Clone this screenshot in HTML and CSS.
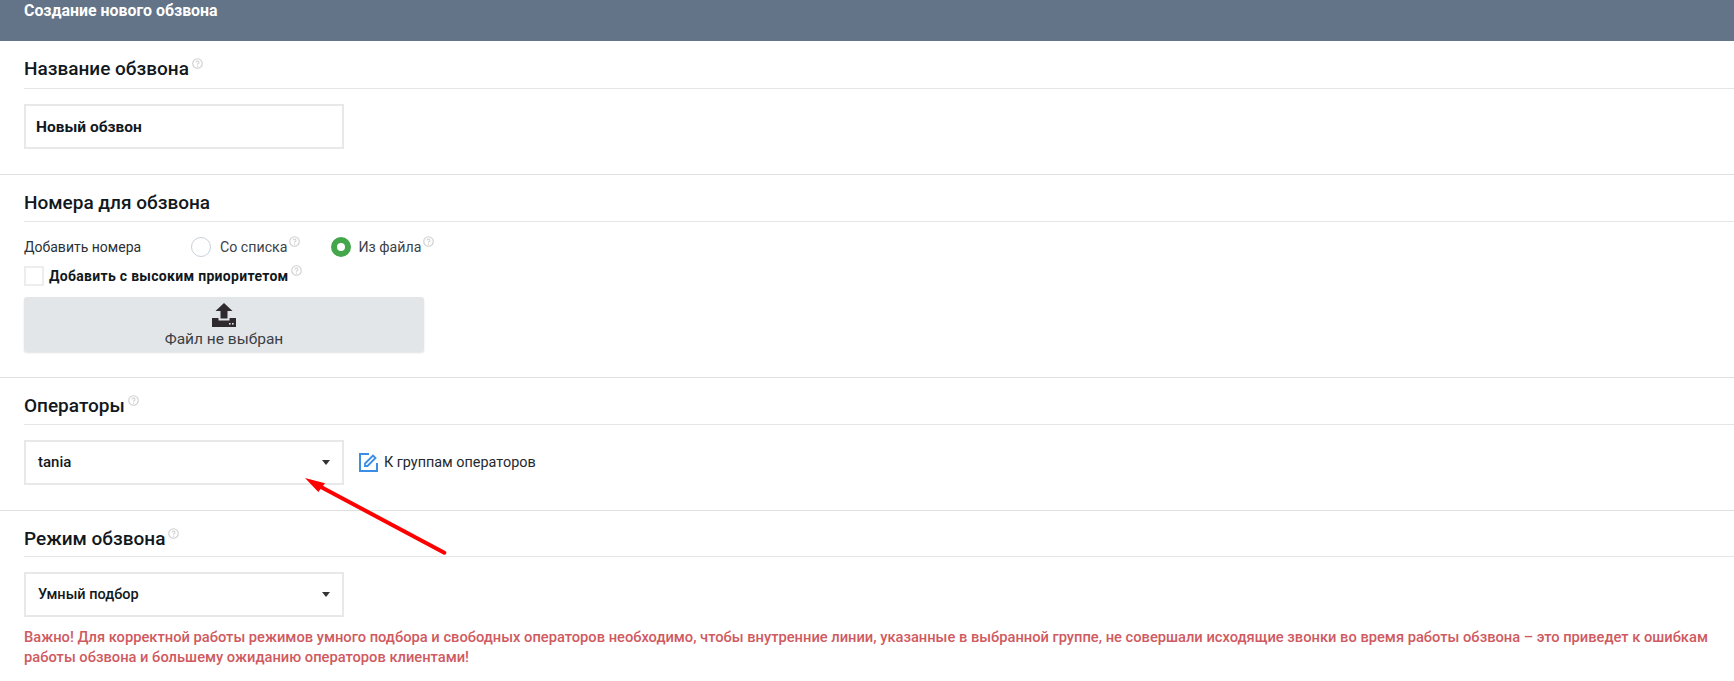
FILE: index.html
```html
<!DOCTYPE html>
<html lang="ru">
<head>
<meta charset="utf-8">
<title>Создание нового обзвона</title>
<link rel="stylesheet" href="styles.css">
</head>
<body>
<header class="topbar">Создание нового обзвона</header>
<section class="section s-name">
  <h2 class="title"><span>Название обзвона</span><svg class="help" viewBox="0 0 12 12"><use href="#q"/></svg></h2>
  <div class="field name-field">Новый обзвон</div>
</section>
<section class="section s-numbers">
  <h2 class="title"><span>Номера для обзвона</span></h2>
  <div class="radios">
    <span class="radio-label">Добавить номера</span>
    <span class="radio"></span><span class="opt">Со списка</span><svg class="help" viewBox="0 0 12 12"><use href="#q"/></svg>
    <span class="radio on"></span><span class="opt">Из файла</span><svg class="help" viewBox="0 0 12 12"><use href="#q"/></svg>
  </div>
  <div class="check-row">
    <span class="check"></span><b class="check-label">Добавить с высоким приоритетом</b><svg class="help" viewBox="0 0 12 12"><use href="#q"/></svg>
  </div>
  <div class="upload">
    <svg class="upload-icon" viewBox="0 0 24 24"><path d="M12 0 L20.5 8 H15.5 V15.5 H8.5 V8 H3.5 Z"/><path d="M0 15 H6.5 V17.5 H17.5 V15 H24 V24 H0 Z"/><rect x="17" y="20" width="1.6" height="1.6" fill="#e3e6e9"/><rect x="20" y="20" width="1.6" height="1.6" fill="#e3e6e9"/></svg>
    <span>Файл не выбран</span>
  </div>
</section>
<section class="section s-ops">
  <h2 class="title"><span>Операторы</span><svg class="help" viewBox="0 0 12 12"><use href="#q"/></svg></h2>
  <div class="select-row">
    <div class="field select"><span class="select-text">tania</span><i class="caret"></i></div>
    <a class="link"><svg class="edit" viewBox="0 0 19 19"><path d="M10 1 H1 V18 H18 V10" fill="none" stroke="#3a8ee6" stroke-width="2"/><path d="M6 10.5 L14 2.5 L16.5 5 L8.5 13 H6 Z" fill="none" stroke="#3a8ee6" stroke-width="1.8"/></svg>К группам операторов</a>
  </div>
</section>
<section class="section s-mode">
  <h2 class="title"><span>Режим обзвона</span><svg class="help" viewBox="0 0 12 12"><use href="#q"/></svg></h2>
  <div class="field select mode-select"><span>Умный подбор</span><i class="caret"></i></div>
  <p class="warn">Важно! Для корректной работы режимов умного подбора и свободных операторов необходимо, чтобы внутренние линии, указанные в выбранной группе, не совершали исходящие звонки во время работы обзвона – это приведет к ошибкам работы обзвона и большему ожиданию операторов клиентами!</p>
</section>
<svg class="arrow" viewBox="0 0 160 90"><path d="M144.3 77.7 L21 12" stroke="#ff0000" stroke-width="4" stroke-linecap="round"/><path d="M5 3 L25 8.3 L18.3 17 Z" fill="#ff0000"/></svg>
<svg class="defs" width="0" height="0"><symbol id="q" viewBox="0 0 12 12"><circle cx="6" cy="6" r="5.2" fill="none" stroke="#cfcfcf" stroke-width="1.2"/><path d="M4.4 4.8 A1.6 1.6 0 1 1 6.6 6.3 Q6 6.6 6 7.4" fill="none" stroke="#cfcfcf" stroke-width="1.1"/><circle cx="6" cy="9" r=".7" fill="#cfcfcf"/></symbol></svg>
</body>
</html>
```
FILE: styles.css
```css
* { box-sizing: border-box; }
html, body { margin: 0; height: 681px; overflow: hidden; }
body { position: relative; background: #fff; font-family: Roboto, "Liberation Sans", sans-serif; color: #111820; font-size: 14px; }
.topbar { height: 41px; background: #637488; color: #fff; font-weight: 700; font-size: 15.9px; line-height: 22px; padding-left: 24px; }
.section { border-bottom: 1px solid #dfdfdf; padding: 0 0 0 24px; }
.title { margin: 0; height: 47px; padding-top: 16px; border-bottom: 1px solid #e6e6e6; font-size: 19px; font-weight: 500; line-height: 24px; display: flex; align-items: flex-start; }
.title .help { margin: 1px 0 0 3px; }
.help { width: 11px; height: 11px; flex: none; }
.field { width: 320px; height: 45px; border: 2px solid #e8e8e8; padding-left: 10px; display: flex; align-items: center; font-weight: 500; font-size: 15px; }
.name-field { font-size: 15.5px; font-weight: 700; }
.s-name { height: 134px; }
.s-name .title { height: 48px; }
.s-name .field { margin-top: 15px; }
.s-numbers { height: 203px; }
.radios { display: flex; align-items: center; height: 20px; margin-top: 15px; color: #2a3138; }
.radio-label { width: 167px; }
.radio { width: 20px; height: 20px; border-radius: 50%; border: 1px solid #c9d0da; background: #fff; margin-right: 9px; }
.radio.on { border: 6px solid #43a64b; margin-left: 31px; margin-right: 7px; }
.opt { color: #3b4249; font-size: 14.2px; }
.radios .help { margin: -12px 0 0 2px; }
.check-row { display: flex; align-items: center; height: 20px; margin-top: 9px; }
.check { width: 20px; height: 20px; border: 2px solid #ededed; margin-right: 5px; }
.check-label { font-weight: 700; letter-spacing: .3px; }
.check-row .help { margin: -12px 0 0 2px; }
.upload { width: 400px; height: 55px; margin-top: 11px; background: #e3e6e9; border-radius: 3px; box-shadow: 0 1px 2px rgba(0,0,0,.12); display: flex; flex-direction: column; align-items: center; padding-top: 6px; font-size: 15.5px; color: #3a3f45; }
.upload-icon { width: 24px; height: 24px; fill: #2e2a2e; }
.upload span { line-height: 22px; margin-top: 1px; }
.s-ops { height: 133px; }
.select-row { display: flex; align-items: center; margin-top: 15px; }
.select { justify-content: space-between; padding: 0 12px; }
.select-text { margin-top: -2px; }
.mode-select { font-size: 14.5px; }
.caret { width: 0; height: 0; border: 4px solid transparent; border-top: 5px solid #333; border-bottom: 0; }
.link { display: flex; align-items: center; margin-left: 15px; color: #23282d; font-size: 14.4px; }
.edit { width: 19px; height: 19px; margin-right: 6px; }
.s-mode { border: 0; }
.s-mode .title { height: 46px; }
.s-mode .select { margin-top: 15px; }
.warn { margin: 10px 0 0; color: #cf5a5f; font-weight: 500; font-size: 14.7px; line-height: 20px; max-width: 1690px; }
.arrow { position: absolute; left: 300px; top: 475px; width: 160px; height: 90px; }
.defs { position: absolute; }
```
